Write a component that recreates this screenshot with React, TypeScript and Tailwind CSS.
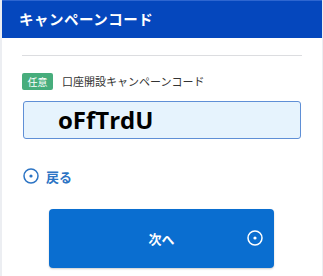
import React from "react";

function Dot({ className }: { className?: string }) {
  return (
    <svg width="16" height="16" viewBox="0 0 16 16" className={className}>
      <circle cx="8" cy="8" r="7" fill="none" stroke="currentColor" strokeWidth="1.5" />
      <circle cx="8" cy="8" r="1.6" fill="currentColor" />
    </svg>
  );
}

export default function App() {
  return (
    <div
      className="w-[323px] h-[276px] overflow-hidden bg-white border-l-2 border-r border-[#eceef2] flex flex-col"
      style={{ fontFamily: '"Noto Sans CJK JP", "Noto Sans", sans-serif' }}
    >
      <div className="h-[38px] bg-[#0547bd] border-t border-[#2e66d0] flex items-center pl-[17px] shrink-0">
        <span className="text-white text-[14.5px] font-bold tracking-[0.5px] leading-none">キャンペーンコード</span>
      </div>
      <div className="px-[20px] pt-[17px]">
        <div className="h-px bg-[#dcdde0]" />
        <div className="flex items-center mt-[17px] h-[17px]">
          <span className="bg-[#47ad7c] text-white text-[10px] leading-none rounded-[2px] w-[31px] h-[17px] flex items-center justify-center">任意</span>
          <span className="ml-[9px] text-[11px] text-[#333] leading-none">口座開設キャンペーンコード</span>
        </div>
        <div className="mt-[11px] ml-px mr-[1px] h-[38px] bg-[#e6f3fd] border-[1.5px] border-[#5f8fd6] rounded-[3px] flex items-center pl-[34px]">
          <span
            className="text-[24px] font-bold text-black leading-none"
            style={{ fontFamily: '"Open Sans", "Noto Sans", sans-serif' }}
          >
            oFfTrdU
          </span>
        </div>
        <div className="flex items-center mt-[29px] ml-[1px] text-[#2c74c4]">
          <Dot />
          <span className="ml-[7px] text-[13px] font-bold leading-none">戻る</span>
        </div>
        <div className="mt-[25px] ml-[27px] w-[225px] h-[59px] bg-[#0a6ed0] rounded-[4px] shadow-[0_1px_2px_rgba(0,0,0,0.2)] relative flex items-center justify-center">
          <span className="text-white text-[13px] font-bold leading-none">次へ</span>
          <Dot className="absolute right-[11px] top-[21px] text-white" />
        </div>
      </div>
    </div>
  );
}
